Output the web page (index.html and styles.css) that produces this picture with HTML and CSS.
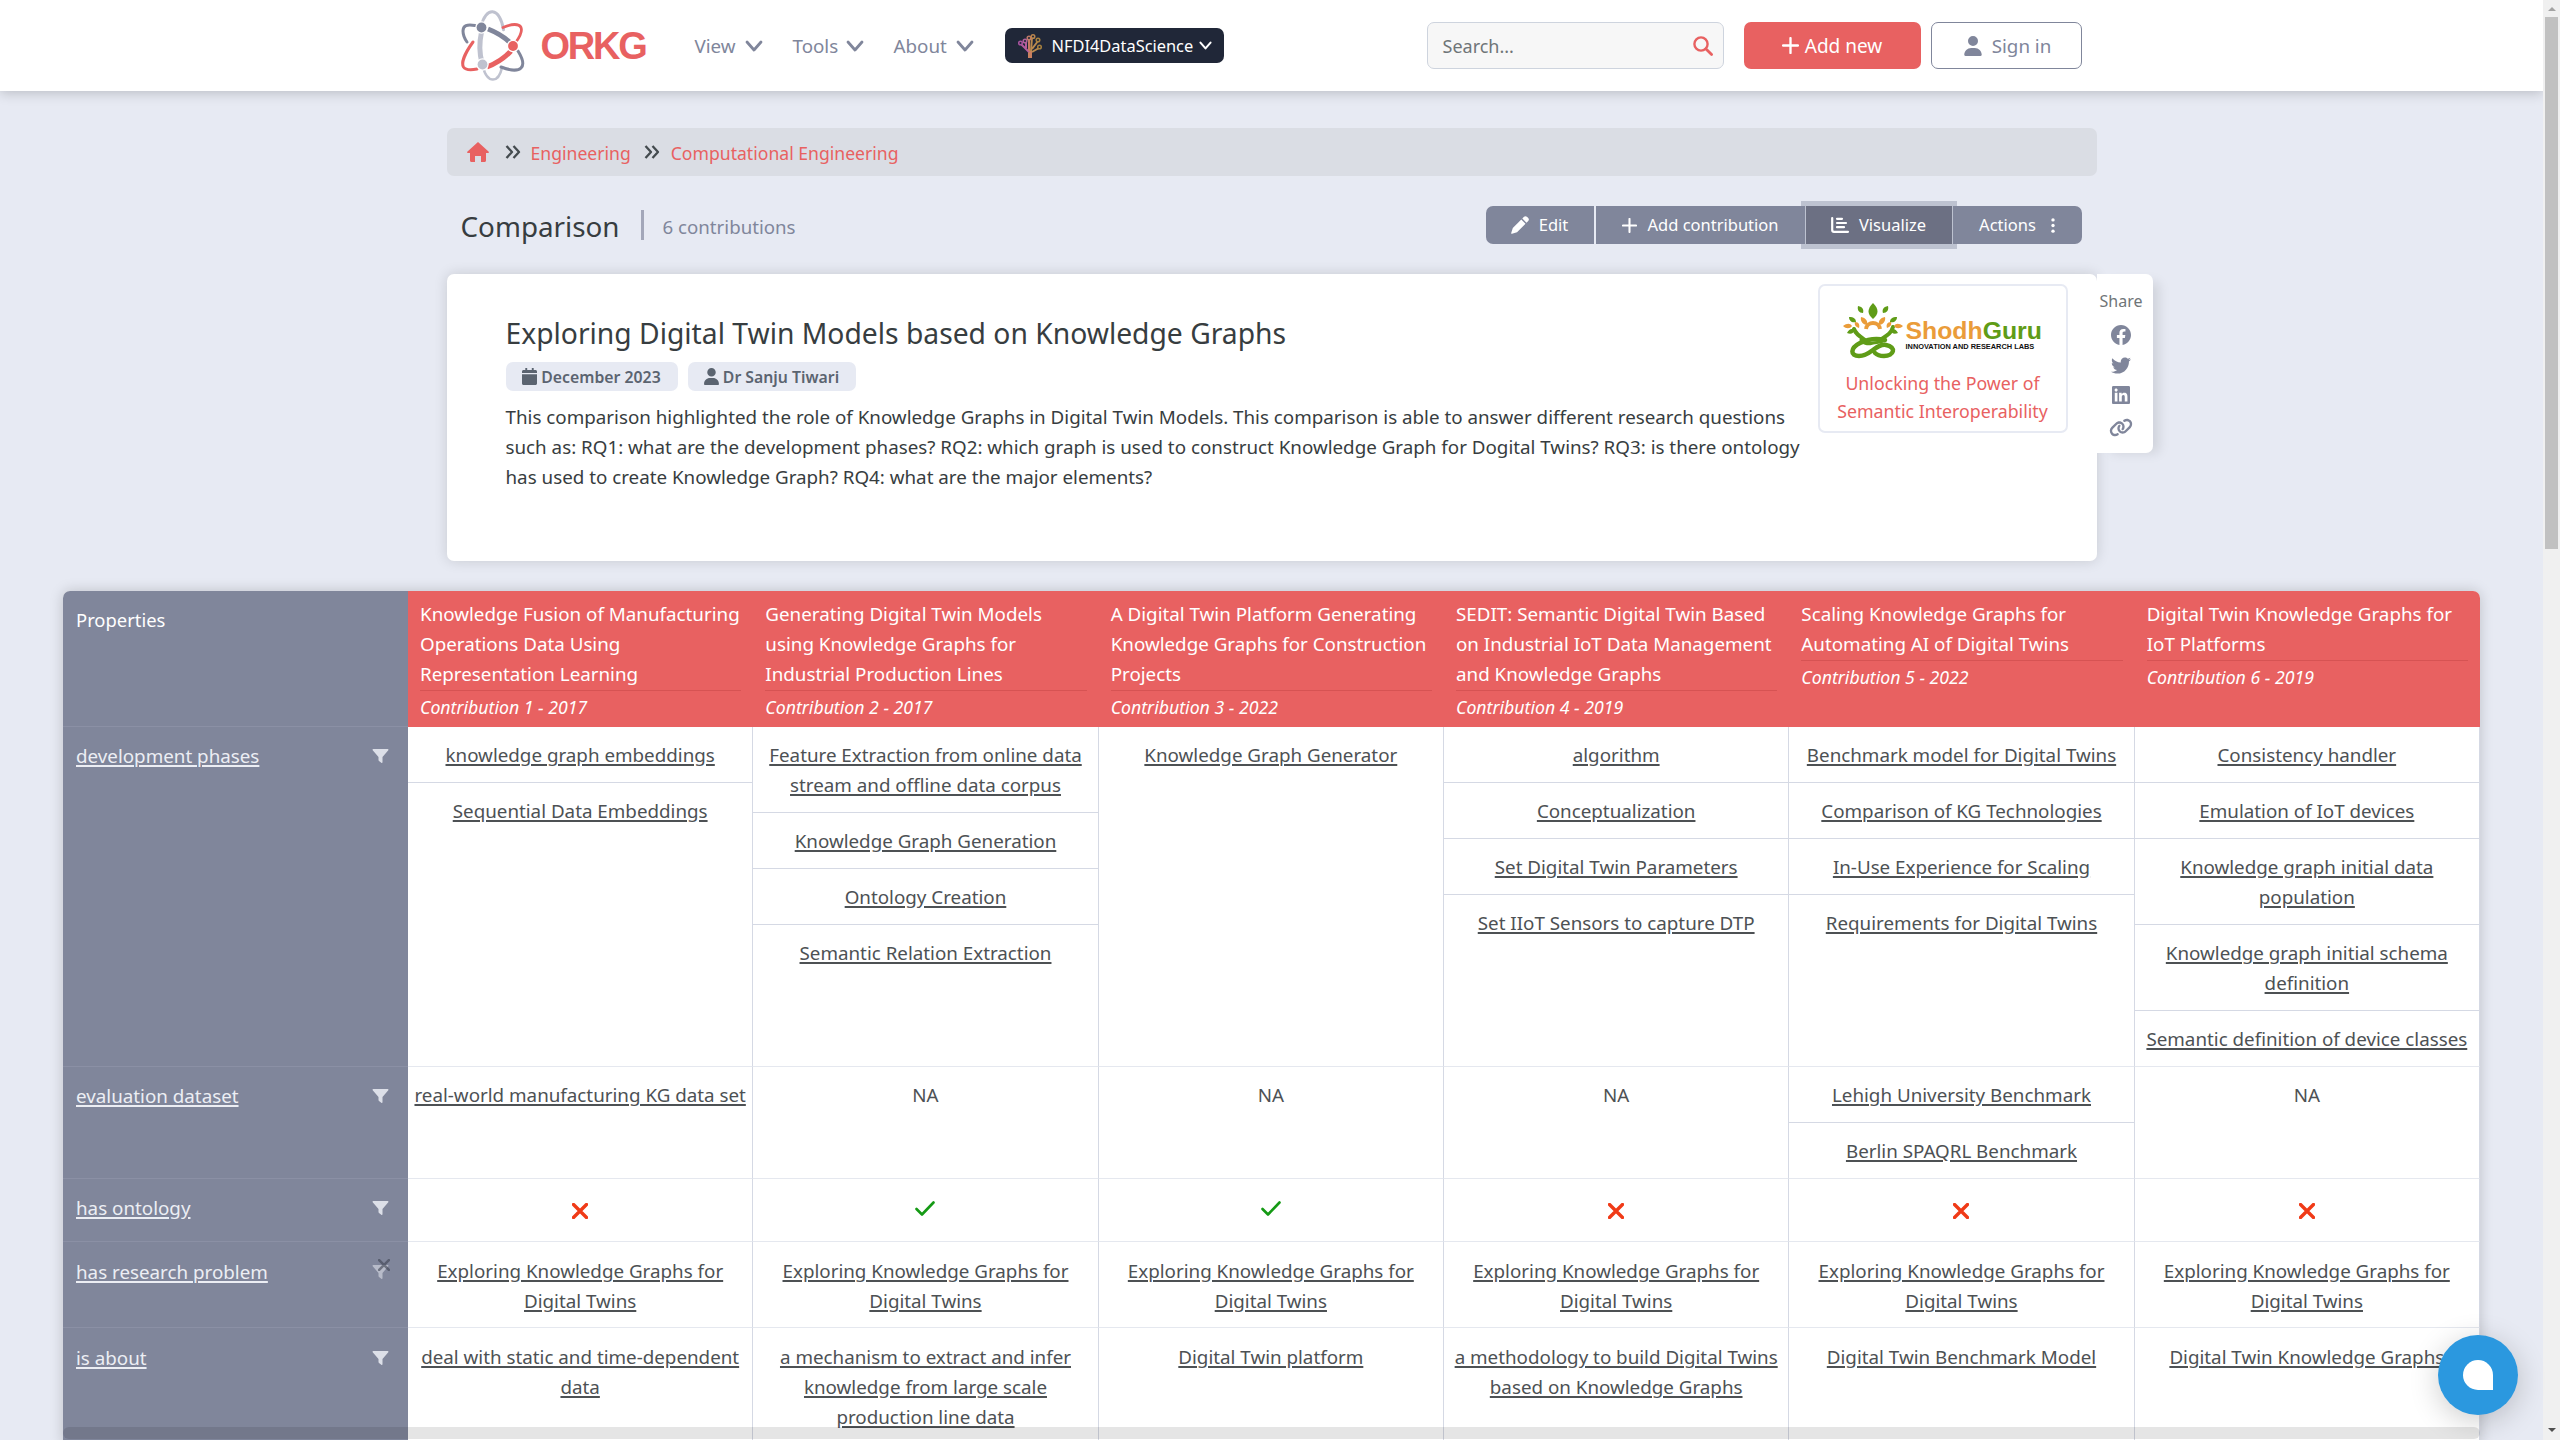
FILE: index.html
```html
<!DOCTYPE html>
<html lang="en">
<head>
<meta charset="utf-8">
<title>Comparison - ORKG</title>
<link rel="stylesheet" href="styles.css">
</head>
<body>
<svg class="defs" width="0" height="0">
  <symbol id="chev" viewBox="0 0 18 12"><path d="M2 2l7 8 7-8" fill="none" stroke="currentColor" stroke-width="2.8" stroke-linecap="round" stroke-linejoin="round"/></symbol>
  <symbol id="user" viewBox="0 0 448 512"><path fill="currentColor" d="M224 256A128 128 0 1 0 224 0a128 128 0 1 0 0 256zm-45.7 48C79.8 304 0 383.8 0 482.3C0 498.700 13.300 512 29.700 512H418.300c16.400 0 29.700-13.300 29.700-29.700C448 383.800 368.200 304 269.700 304H178.300z"/></symbol>
  <symbol id="plus" viewBox="0 0 16 16"><path d="M8 1v14M1 8h14" fill="none" stroke="currentColor" stroke-width="2.200" stroke-linecap="round"/></symbol>
  <symbol id="funnel" viewBox="0 0 16 14"><path fill="currentColor" d="M.8 0h14.400c.7 0 1 .8.600 1.300L10 8v5.200c0 .7-.6 1-1.200.6L6.500 12c-.3-.2-.5-.5-.5-.9V8L.2 1.300C-.2.8.1 0 .8 0z"/></symbol>
  <symbol id="raquo" viewBox="0 0 16 14"><path d="M1.500 1l5.500 6-5.500 6M8.500 1l5.500 6-5.500 6" fill="none" stroke="currentColor" stroke-width="2.300" stroke-linejoin="round"/></symbol>
  <symbol id="cross" viewBox="0 0 16 16"><path d="M1.500 1.500l13 13M14.500 1.500l-13 13" fill="none" stroke="currentColor" stroke-width="3.400" stroke-linecap="round"/></symbol>
  <symbol id="check" viewBox="0 0 20 15"><path d="M1.500 8l5.500 5.500L18.500 1.500" fill="none" stroke="currentColor" stroke-width="2.600" stroke-linecap="round" stroke-linejoin="round"/></symbol>
</svg>
<div class="page">
<header class="topbar"><div class="container topbar-in">
  <a class="logo">
    <svg class="logo-mark" viewBox="0 0 64 72">
      <g fill="none" stroke-linecap="round">
        <path d="M20.500 16C22 7 27 1.500 31.500 1.800c5.500.4 9.500 8 11 18" stroke="#bfc2cf" stroke-width="3"/>
        <path d="M22 57c2 8 6 12.500 10 12.500 4.500 0 7.500-5 9-12" stroke="#bfc2cf" stroke-width="2.600"/>
        <path d="M20.500 22c-2.200 10-2.200 21 .5 31" stroke="#bfc2cf" stroke-width="5" stroke-linecap="butt"/>
        <path d="M14 15.500C6 14 2 15.500 2 21c0 3.500 1.500 7.500 4 11" stroke="#80869b" stroke-width="3"/>
        <path d="M27 19c9 3.500 17 8.500 23 14.500" stroke="#80869b" stroke-width="5" stroke-linecap="butt"/>
        <path d="M57 41c5 8 6 14 3 17-3 3-11 2.500-20-1" stroke="#80869b" stroke-width="3"/>
        <path d="M42 17.500c9-4 16-4 18 0 1.600 4-1 9-5 14.500" stroke="#e86161" stroke-width="2.800"/>
        <path d="M50 41c-6 6.500-15 12.500-24 16" stroke="#e86161" stroke-width="5" stroke-linecap="butt"/>
        <path d="M12 32C4 43 0 53 2.500 57c2 3 7.500 3.200 13.500 2" stroke="#e86161" stroke-width="3"/>
      </g>
      <circle cx="20.500" cy="17.500" r="6.200" fill="#fff"/><circle cx="20.500" cy="17.500" r="4.900" fill="#80869b"/>
      <circle cx="52" cy="36" r="6.200" fill="#fff"/><circle cx="52" cy="36" r="4.900" fill="#e86161"/>
      <circle cx="21.500" cy="54.500" r="6.200" fill="#fff"/><circle cx="21.500" cy="54.500" r="4.900" fill="#bfc2cf"/>
    </svg>
    <span class="logo-text">ORKG</span>
  </a>
  <nav class="nav">
    <a class="nav-item n1"><span>View</span><svg><use href="#chev"/></svg></a>
    <a class="nav-item n2"><span>Tools</span><svg><use href="#chev"/></svg></a>
    <a class="nav-item n3"><span>About</span><svg><use href="#chev"/></svg></a>
    <a class="nfdi">
      <svg class="tree" viewBox="0 0 24 24"><g fill="none" stroke-width="2"><path stroke="#c9805f" stroke-width="4" d="M12 24v-7"/><path stroke="#b45c9c" d="M11 18L3 10M8 14V9"/><path stroke="#c67c62" d="M11 17V5"/><path stroke="#b98a4e" d="M13 17l1-14M14 15l6-8M14 18l7-4"/></g><g fill="#202738" stroke-width="1.500"><circle cx="2.500" cy="9" r="1.800" stroke="#a9539f"/><circle cx="7" cy="7" r="1.800" stroke="#b0609a"/><circle cx="11" cy="4" r="1.800" stroke="#c07a68"/><circle cx="15" cy="2.500" r="1.800" stroke="#b9854e"/><circle cx="20" cy="6" r="1.800" stroke="#a7813f"/><circle cx="21.500" cy="13" r="1.800" stroke="#a7813f"/></g></svg>
      <span>NFDI4DataScience</span><svg class="chev-s"><use href="#chev"/></svg></a>
  </nav>
  <div class="search"><span>Search...</span><svg viewBox="0 0 20 20"><circle cx="8" cy="8" r="6.600" fill="none" stroke="#e86161" stroke-width="2.400"/><path d="M13 13l5.600 5.600" stroke="#e86161" stroke-width="2.800" stroke-linecap="round"/></svg></div>
  <a class="btn-add"><svg><use href="#plus"/></svg><span>Add new</span></a>
  <a class="btn-sign"><svg><use href="#user"/></svg><span>Sign in</span></a>
</div></header>

<main>
<div class="container crumbs">
  <svg class="home" viewBox="0 0 22 20"><path fill="currentColor" d="M11 0l10.500 9.500c.8.800.3 1.500-.6 1.500H19v7.500c0 .9-.6 1.500-1.500 1.500H14v-6H8v6H4.500C3.600 20 3 19.400 3 18.500V11H1.100C.2 11-.3 10.300.5 9.500z"/></svg>
  <svg class="raquo"><use href="#raquo"/></svg><a>Engineering</a>
  <svg class="raquo"><use href="#raquo"/></svg><a>Computational Engineering</a>
</div>
<div class="container titlebar">
  <h1>Comparison</h1><span class="vbar"></span><span class="count">6 contributions</span>
  <div class="btns">
    <a class="b1"><svg viewBox="0 0 18 18"><path fill="#fff" d="M13 .8c.9-.9 2-.9 2.900 0l1.300 1.300c.9.900.9 2 0 2.900L15.500 6.700 11.300 2.500zM10.300 3.500l4.200 4.200L6 16.200 1 17.800c-.6.100-.9-.2-.8-.8L1.800 12z"/></svg><span>Edit</span></a>
    <a class="b2"><svg><use href="#plus"/></svg><span>Add contribution</span></a>
    <a class="b3"><svg viewBox="0 0 18 16"><path fill="none" stroke="#fff" stroke-width="2.200" stroke-linecap="round" d="M1.200 1v12c0 1.200.6 1.800 1.800 1.800h14M6 1.800h5M6 6h9M6 10.200h7"/></svg><span>Visualize</span></a>
    <a class="b4"><span>Actions</span><svg viewBox="0 0 4 16"><g fill="#fff"><circle cx="2" cy="2" r="1.800"/><circle cx="2" cy="8" r="1.800"/><circle cx="2" cy="14" r="1.800"/></g></svg></a>
  </div>
</div>

<section class="container card">
  <div class="card-text">
    <h2>Exploring Digital Twin Models based on Knowledge Graphs</h2>
    <div class="badges">
      <span class="badge bd1"><svg viewBox="0 0 15 17"><path fill="currentColor" d="M3.300 0h1.900v2h4.600V0h1.900v2H13.500c.8 0 1.500.7 1.500 1.500V5H0V3.500C0 2.700.7 2 1.500 2h1.800zM0 6.200h15v9.300c0 .8-.7 1.500-1.500 1.500h-12C.7 17 0 16.300 0 15.500z"/></svg><span>December 2023</span></span>
      <span class="badge bd2"><svg><use href="#user"/></svg><span>Dr Sanju Tiwari</span></span>
    </div>
    <p>This comparison highlighted the role of Knowledge Graphs in Digital Twin Models. This comparison is able to answer different research questions<br>such as: RQ1: what are the development phases? RQ2: which graph is used to construct Knowledge Graph for Dogital Twins? RQ3: is there ontology<br>has used to create Knowledge Graph? RQ4: what are the major elements?</p>
  </div>
  <a class="sponsor">
    <span class="sg">
      <svg class="sg-mark" viewBox="0 0 60 56">
        <g fill="none" stroke="#5f9c17" stroke-linecap="round">
          <path stroke-width="4" d="M11 26c2 6 7 8 14 13M50 24c-2 7-7 9-13 13"/>
          <path stroke-width="4.500" d="M42 37c-8-2-17-1-25 3-10 5-10 13-1 13 6 0 10-3 14-6s8-6 13-5c11 2 8 11-2 11-4 0-7-1-9-3"/>
          <path stroke-width="3" d="M18 37c4 5 8 4 12 3s8 0 12-3"/>
        </g>
        <path d="M23 26c1-8 13-8 14 0" fill="none" stroke="#ea9c3a" stroke-width="3.800"/>
        <g fill="#5f9c17"><path d="M30 0c6 6 6 11 0 16-6-5-6-10 0-16z"/><path d="M15 3c5 1 6 4 5 7-4 0-6-3-5-7zM45 3c-5 1-6 4-5 7 4 0 6-3 5-7zM6 14c5 0 7 2 7 5-4 1-7-1-7-5zM54 14c-5 0-7 2-7 5 4 1 7-1 7-5zM4 30c2-4 5-5 7-3 0 3-3 5-7 3zM55 30c-2-4-5-5-7-3 0 3 3 5 7 3z"/></g>
        <g fill="#ea9c3a"><path d="M0 23c4-3 7-3 9 0-2 3-6 3-9 0zM60 23c-4-3-7-3-9 0 2 3 6 3 9 0zM18 14c5 1 7 4 6 8-4 0-7-4-6-8zM42 14c-5 1-7 4-6 8 4 0 7-4 6-8zM12 19c4 0 5 3 4 6-3-1-5-3-4-6zM48 19c-4 0-5 3-4 6 3-1 5-3 4-6z"/></g>
      </svg>
      <span class="sg-txt"><span class="sg-name"><i>Shodh</i>Guru</span><span class="sg-sub">INNOVATION AND RESEARCH LABS</span></span>
    </span>
    <span class="sp-line">Unlocking the Power of</span>
    <span class="sp-line">Semantic Interoperability</span>
  </a>
  <aside class="share"><span>Share</span>
    <svg class="s1" viewBox="8 8 496 496"><path d="M504 256C504 119 393 8 256 8S8 119 8 256c0 123.780 90.690 226.380 209.250 245V327.690h-63V256h63v-54.640c0-62.150 37-96.480 93.670-96.480 27.140 0 55.520 4.840 55.520 4.840v61h-31.280c-30.800 0-40.410 19.120-40.410 38.730V256h68.780l-11 71.690h-57.780V501C413.310 482.380 504 379.780 504 256z"/></svg>
    <svg class="s2" viewBox="0 48 512 416"><path d="M459.370 151.716c.325 4.548.325 9.097.325 13.645 0 138.720-105.583 298.558-298.558 298.558-59.452 0-114.680-17.219-161.137-47.106 8.447.974 16.568 1.299 25.340 1.299 49.055 0 94.213-16.568 130.274-44.832-46.132-.975-84.792-31.188-98.112-72.772 6.498.974 12.995 1.624 19.818 1.624 9.421 0 18.843-1.300 27.614-3.573-48.081-9.747-84.143-51.980-84.143-102.985v-1.299c13.969 7.797 30.214 12.670 47.431 13.319-28.264-18.843-46.781-51.005-46.781-87.391 0-19.492 5.197-37.360 14.294-52.954 51.655 63.675 129.300 105.258 216.365 109.807-1.624-7.797-2.599-15.918-2.599-24.040 0-57.828 46.782-104.934 104.934-104.934 30.213 0 57.502 12.670 76.670 33.137 23.715-4.548 46.456-13.320 66.599-25.340-7.798 24.366-24.366 44.833-46.132 57.827 21.117-2.273 41.584-8.122 60.426-16.243-14.292 20.791-32.161 39.308-52.628 54.253z"/></svg>
    <svg class="s3" viewBox="0 32 448 448"><path d="M416 32H31.900C14.300 32 0 46.500 0 64.300v383.400C0 465.500 14.300 480 31.900 480H416c17.600 0 32-14.500 32-32.300V64.300c0-17.800-14.400-32.300-32-32.300zM135.400 416H69V202.200h66.500V416zm-33.200-243c-21.300 0-38.500-17.300-38.500-38.500S80.900 96 102.200 96c21.200 0 38.500 17.300 38.500 38.500 0 21.300-17.200 38.500-38.500 38.500zm282.100 243h-66.400V312c0-24.800-.5-56.700-34.500-56.700-34.600 0-39.900 27-39.900 54.900V416h-66.400V202.200h63.700v29.200h.9c8.900-16.800 30.600-34.500 62.900-34.500 67.200 0 79.700 44.300 79.700 101.900V416z"/></svg>
    <svg class="s4" viewBox="0 0 640 512"><path d="M579.800 267.700c56.500-56.500 56.500-148 0-204.500c-50-50-128.800-56.500-186.300-15.400l-1.600 1.100c-14.400 10.300-17.700 30.300-7.400 44.600s30.300 17.700 44.600 7.400l1.600-1.100c32.100-22.900 76-19.300 103.800 8.600c31.500 31.500 31.500 82.500 0 114L422.300 334.800c-31.500 31.500-82.500 31.500-114 0c-27.900-27.900-31.500-71.800-8.600-103.800l1.100-1.600c10.300-14.400 6.900-34.400-7.400-44.600s-34.400-6.900-44.600 7.400l-1.100 1.600C206.500 251.200 213 330 263 380c56.500 56.500 148 56.500 204.500 0L579.800 267.700zM60.200 244.300c-56.500 56.500-56.500 148 0 204.500c50 50 128.800 56.500 186.300 15.400l1.600-1.100c14.400-10.300 17.700-30.300 7.400-44.600s-30.300-17.700-44.600-7.400l-1.600 1.100c-32.100 22.900-76 19.300-103.800-8.600C74 372 74 321 105.500 289.500L217.700 177.200c31.500-31.500 82.500-31.500 114 0c27.900 27.900 31.500 71.800 8.600 103.900l-1.100 1.600c-10.300 14.400-6.900 34.400 7.400 44.600s34.400 6.900 44.600-7.400l1.100-1.600C433.500 260.800 427 182 377 132c-56.500-56.500-148-56.500-204.500 0L60.200 244.300z"/></svg>
  </aside>
</section>

<section class="table">
  <div class="row head">
    <div class="prop"><span>Properties</span></div>
    <div class="col"><b>Knowledge Fusion of Manufacturing<br>Operations Data Using<br>Representation Learning</b><em>Contribution 1 - 2017</em></div>
    <div class="col"><b>Generating Digital Twin Models<br>using Knowledge Graphs for<br>Industrial Production Lines</b><em>Contribution 2 - 2017</em></div>
    <div class="col"><b>A Digital Twin Platform Generating<br>Knowledge Graphs for Construction<br>Projects</b><em>Contribution 3 - 2022</em></div>
    <div class="col"><b>SEDIT: Semantic Digital Twin Based<br>on Industrial IoT Data Management<br>and Knowledge Graphs</b><em>Contribution 4 - 2019</em></div>
    <div class="col"><b>Scaling Knowledge Graphs for<br>Automating AI of Digital Twins</b><em>Contribution 5 - 2022</em></div>
    <div class="col"><b>Digital Twin Knowledge Graphs for<br>IoT Platforms</b><em>Contribution 6 - 2019</em></div>
  </div>
  <div class="row">
    <div class="prop"><a>development phases</a><svg><use href="#funnel"/></svg></div>
    <div class="cell"><div><a>knowledge graph embeddings</a></div><div class="more"><a>Sequential Data Embeddings</a></div></div>
    <div class="cell"><div><a>Feature Extraction from online data<br>stream and offline data corpus</a></div><div><a>Knowledge Graph Generation</a></div><div><a>Ontology Creation</a></div><div><a>Semantic Relation Extraction</a></div></div>
    <div class="cell"><div><a>Knowledge Graph Generator</a></div></div>
    <div class="cell"><div><a>algorithm</a></div><div><a>Conceptualization</a></div><div><a>Set Digital Twin Parameters</a></div><div><a>Set IIoT Sensors to capture DTP</a></div></div>
    <div class="cell"><div><a>Benchmark model for Digital Twins</a></div><div><a>Comparison of KG Technologies</a></div><div><a>In-Use Experience for Scaling</a></div><div><a>Requirements for Digital Twins</a></div></div>
    <div class="cell"><div><a>Consistency handler</a></div><div><a>Emulation of IoT devices</a></div><div><a>Knowledge graph initial data<br>population</a></div><div><a>Knowledge graph initial schema<br>definition</a></div><div><a>Semantic definition of device classes</a></div></div>
  </div>
  <div class="row">
    <div class="prop"><a>evaluation dataset</a><svg><use href="#funnel"/></svg></div>
    <div class="cell"><div><a>real-world manufacturing KG data set</a></div></div>
    <div class="cell"><div>NA</div></div>
    <div class="cell"><div>NA</div></div>
    <div class="cell"><div>NA</div></div>
    <div class="cell"><div><a>Lehigh University Benchmark</a></div><div><a>Berlin SPAQRL Benchmark</a></div></div>
    <div class="cell"><div>NA</div></div>
  </div>
  <div class="row bool">
    <div class="prop"><a>has ontology</a><svg><use href="#funnel"/></svg></div>
    <div class="cell"><svg class="no"><use href="#cross"/></svg></div>
    <div class="cell"><svg class="yes"><use href="#check"/></svg></div>
    <div class="cell"><svg class="yes"><use href="#check"/></svg></div>
    <div class="cell"><svg class="no"><use href="#cross"/></svg></div>
    <div class="cell"><svg class="no"><use href="#cross"/></svg></div>
    <div class="cell"><svg class="no"><use href="#cross"/></svg></div>
  </div>
  <div class="row low">
    <div class="prop"><a>has research problem</a><span class="off"><svg><use href="#funnel"/></svg><svg class="offx"><use href="#cross"/></svg></span></div>
    <div class="cell"><div><a>Exploring Knowledge Graphs for<br>Digital Twins</a></div></div>
    <div class="cell"><div><a>Exploring Knowledge Graphs for<br>Digital Twins</a></div></div>
    <div class="cell"><div><a>Exploring Knowledge Graphs for<br>Digital Twins</a></div></div>
    <div class="cell"><div><a>Exploring Knowledge Graphs for<br>Digital Twins</a></div></div>
    <div class="cell"><div><a>Exploring Knowledge Graphs for<br>Digital Twins</a></div></div>
    <div class="cell"><div><a>Exploring Knowledge Graphs for<br>Digital Twins</a></div></div>
  </div>
  <div class="row low">
    <div class="prop"><a>is about</a><svg><use href="#funnel"/></svg></div>
    <div class="cell"><div><a>deal with static and time-dependent<br>data</a></div></div>
    <div class="cell"><div><a>a mechanism to extract and infer<br>knowledge from large scale<br>production line data</a></div></div>
    <div class="cell"><div><a>Digital Twin platform</a></div></div>
    <div class="cell"><div><a>a methodology to build Digital Twins<br>based on Knowledge Graphs</a></div></div>
    <div class="cell"><div><a>Digital Twin Benchmark Model</a></div></div>
    <div class="cell"><div><a>Digital Twin Knowledge Graphs</a></div></div>
  </div>
</section>
</main>
</div>
<div class="hscroll"></div>
<div class="chat"><span></span></div>
<div class="vscroll"><i class="up"></i><span class="thumb"></span><i class="down"></i></div>
</body>
</html>
```
FILE: styles.css
```css
* { box-sizing: border-box; }
html, body { height: 100%; }
body {
  margin: 0;
  display: flex;
  overflow: hidden;
  background: #e7eaf3;
  color: #373d40;
  font: 18.8px/30px "Noto Sans", sans-serif;
}
svg { flex: none; overflow: visible; }
.defs { position: absolute; }
.page { flex: none; width: 2543px; height: 1440px; overflow: hidden; }
.container { width: 1650px; margin: 0 auto; }

.topbar { height: 91px; background: #fff; box-shadow: 0 2px 12px rgba(0, 0, 0, .2); position: relative; z-index: 2; }
.topbar-in { height: 91px; display: flex; align-items: center; padding: 0 15px 0 14px; white-space: nowrap; }
.logo { display: flex; align-items: center; width: 234px; }
.logo-mark { width: 64px; height: 72px; }
.logo-text { margin-left: 16px; color: #e86161; font: bold 38px/40px "Liberation Sans", sans-serif; letter-spacing: -2.2px; }
.nav { display: flex; align-items: center; color: #80869b; }
.nav-item { display: flex; align-items: center; justify-content: space-between; }
.nav-item svg { width: 18px; height: 12px; }
.n1 { width: 68px; margin-right: 30px; }
.n2 { width: 71px; margin-right: 30px; }
.n3 { width: 80px; margin-right: 31px; }
.nfdi { display: flex; align-items: center; width: 219px; height: 35px; padding: 0 0 0 13px; border-radius: 7px; background: #202738; color: #fff; font-size: 16.400px; }
.nfdi span { width: 141px; margin: 1px 6px 0 10px; }
.tree { width: 24px; height: 24px; }
.chev-s { width: 13px; height: 9px; }
.search { display: flex; align-items: center; justify-content: space-between; width: 297px; height: 47px; margin-left: 203px; padding: 0 10px 0 15px; border: 1px solid #ced4de; border-radius: 7px; background: #f7f7f7; color: #6f7578; font-size: 18px; }
.search svg { width: 20px; height: 20px; }
.btn-add, .btn-sign { display: flex; align-items: center; justify-content: center; height: 47px; border-radius: 7px; }
.btn-add { gap: 6px; width: 177px; margin-left: 20px; background: #e86161; color: #fff; font-size: 19px; }
.btn-add svg { width: 17px; height: 17px; }
.btn-sign { gap: 10px; width: 151px; margin-left: auto; padding-left: 3px; border: 1px solid #80869b; color: #80869b; background: #fff; }
.btn-sign svg { width: 18px; height: 20px; }

.crumbs { display: flex; align-items: center; height: 48px; margin-top: 37px; padding-left: 20px; border-radius: 7px; background: #dadde4; color: #e86161; font-size: 17.600px; }
.crumbs a { padding-top: 1px; }
.home { width: 22px; height: 20px; }
.raquo { width: 16px; height: 14px; margin: 0 11px 0 13px; color: #444b4f; }
.home + .raquo { margin-left: 16px; margin-right: 10px; }

.titlebar { display: flex; align-items: center; height: 98px; padding: 0 15px 0 14px; white-space: nowrap; }
h1 { width: 159px; margin: 2px 0 0; font-weight: 400; font-size: 27.800px; line-height: 40px; color: #373d40; }
.vbar { width: 3px; height: 30px; margin: 0 19px 0 21px; background: #a3a7b9; }
.count { padding-top: 4px; color: #80869b; font-size: 18.700px; }
.btns { display: flex; gap: 1px; margin-left: auto; height: 38px; color: #fff; font-size: 16.500px; }
.btns a { display: flex; align-items: center; justify-content: center; background: #80869b; }
.btns .b1 { width: 108px; margin-right: 1px; gap: 10px; border-radius: 7px 0 0 7px; }
.b1 svg { width: 18px; height: 18px; }
.b2 { width: 209px; gap: 11px; }
.b2 svg { width: 15px; height: 15px; }
.btns .b3 { width: 146px; gap: 10px; background: #6c7083; box-shadow: 0 0 0 5px rgba(128, 134, 155, .4); position: relative; }
.b3 svg { width: 18px; height: 16px; }
.btns .b4 { width: 129px; gap: 15px; border-radius: 0 7px 7px 0; }
.b4 svg { width: 4px; height: 15px; }

.card { position: relative; display: flex; align-items: flex-start; height: 287px; padding: 0 29px 0 59px; border-radius: 7px; background: #fff; box-shadow: 0 0 14px rgba(0, 0, 0, .14); white-space: nowrap; }
.card-text { flex: 1; min-width: 0; padding-top: 37px; }
h2 { margin: 0; font-weight: 400; font-size: 28.250px; line-height: 44px; }
.badges { display: flex; gap: 10px; margin: 7px 0 11px; }
.badge { display: flex; align-items: center; justify-content: center; gap: 4px; height: 29px; border-radius: 7px; background: #e7eaf3; color: #5b6470; font-size: 15.800px; font-weight: 600; }
.badge svg { width: 15px; height: 17px; }
.bd1 { width: 172px; }
.bd2 { width: 168px; }
.card-text p { margin: 0; }
.sponsor { display: flex; flex-direction: column; align-items: center; width: 250px; height: 149px; margin-top: 10px; padding-top: 17px; border: 2px solid #e7eaf3; border-radius: 7px; color: #e86161; font-size: 17.750px; }
.sg { display: flex; width: 200px; height: 56px; margin-bottom: 10px; }
.sg-mark { width: 60px; height: 56px; }
.sg-txt { display: flex; flex-direction: column; padding: 15px 0 0 3px; }
.sg-name { font: bold 24.800px/25px "Liberation Sans", sans-serif; color: #5f9c17; }
.sg-name i { font-style: normal; color: #ea9c3a; }
.sg-sub { font: bold 7.400px/8px "Liberation Sans", sans-serif; color: #111; }
.sp-line { line-height: 28px; }
.share { position: absolute; left: 100%; top: 0; display: flex; flex-direction: column; align-items: center; width: 56px; height: 179px; padding: 12px 7px 0 0; border-radius: 0 7px 7px 0; background: #fff; box-shadow: 10px 4px 12px -4px rgba(0, 0, 0, .1); color: #6f7578; font-size: 16px; }
.share svg { fill: #80869b; }
.s1 { width: 20px; height: 20px; margin-top: 9px; }
.s2 { width: 20px; height: 17px; margin-top: 12px; }
.s3 { width: 18px; height: 18px; margin-top: 12px; }
.s4 { width: 24px; height: 19px; margin-top: 14px; }

.table { width: 2417px; margin: 30px 0 0 63px; border-radius: 7px 7px 0 0; background: #fff; box-shadow: 0 0 14px rgba(0, 0, 0, .18); white-space: nowrap; }
.row { display: grid; grid-template-columns: 345px repeat(6, 1fr); }
.prop { display: flex; justify-content: space-between; align-items: flex-start; padding: 14px 19px 0 13px; background: #80869b; border-bottom: 1px solid #8b90a5; color: #eceef4; }
.prop a, .cell a { text-decoration: underline; text-decoration-thickness: 2px; text-underline-offset: 2px; }
.prop svg { width: 17px; height: 14px; margin-top: 8px; color: #dcdfe8; }
.off { position: relative; display: flex; }
.off svg { opacity: .6; }
.off .offx { position: absolute; left: 6px; top: -6px; width: 12px; height: 12px; color: #3f4452; }
.head { height: 136px; color: #fff; }
.head .prop { border-radius: 7px 0 0 0; color: #fff; font-size: 18.400px; }
.col { padding: 8px 12px 0; background: #e86161; }
.col:last-child { border-radius: 0 7px 0 0; }
.col b { display: block; padding-bottom: 1px; border-bottom: 1px solid #d65353; font-weight: 400; }
.col em { display: block; width: max-content; padding-top: 1px; font-size: 17.700px; }
.cell { border-right: 1px solid #d5d9e4; border-bottom: 1px solid #e5e8ef; color: #4d5154; text-align: center; }
.cell div { padding: 13px 0 12px; border-bottom: 1px solid #d5d9e4; }
.cell div:last-child { border-bottom: 0; }
.low .cell div { padding: 14px 0 11px; }
.low .prop { padding-top: 15px; }
.bool .cell { height: 63px; display: flex; align-items: center; justify-content: center; padding-top: 2px; }
.no { width: 16px; height: 16px; color: #f03a17; }
.yes { width: 20px; height: 15px; margin-top: -6px; color: #159a15; }

.hscroll { position: fixed; left: 63px; top: 1427px; width: 2417px; height: 12px; border-radius: 6px; background: rgba(0, 0, 0, .1); }
.chat { position: fixed; left: 2438px; top: 1335px; display: flex; align-items: center; justify-content: center; width: 80px; height: 80px; border-radius: 50%; background: #2b98df; box-shadow: 0 6px 30px rgba(0, 0, 0, .2); }
.chat span { width: 30px; height: 30px; border-radius: 15px 15px 0 15px; background: #fff; }
.vscroll { flex: none; display: flex; flex-direction: column; align-items: center; width: 17px; height: 1440px; background: #f0f0f0; }
.up { margin-top: 7px; border: 4px solid transparent; border-top: 0; border-bottom-color: #a3a3a3; }
.thumb { width: 13px; height: 532px; margin-top: 6px; background: #c1c1c1; }
.down { margin: auto 0 8px; border: 4px solid transparent; border-bottom: 0; border-top-color: #505050; }
```
